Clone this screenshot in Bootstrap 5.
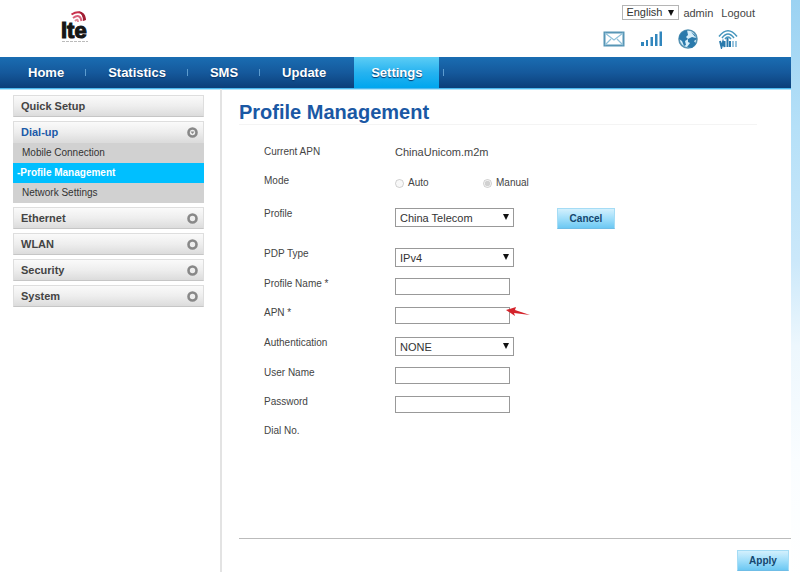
<!DOCTYPE html>
<html lang="en">
<head>
<meta charset="utf-8">
<meta name="viewport" content="width=device-width, initial-scale=1">
<title>Profile Management</title>
<link href="https://cdn.jsdelivr.net/npm/bootstrap@5.3.0/dist/css/bootstrap.min.css" rel="stylesheet">
<style>
body{font-family:"Liberation Sans",Arial,sans-serif;font-size:11px;line-height:16px;color:#444;background:linear-gradient(#9bd2f2,#b5e0f8 22%,#cbe8fa 45%,#edf7fd 60%,#fafdff 80%,#fff) right top/9px 100% no-repeat #fff;padding-right:9px;min-height:100vh}
a{color:inherit;text-decoration:none}
.topbar{height:57px}
.brand-logo{padding:10px 0 0 60px}
.tools{padding:5px 36px 0 0}
.status-icons{gap:14px;padding-right:16px}
.mainnav{background:linear-gradient(#1a6db2,#15599c 50%,#0b3f7a);border-bottom:1px solid #4db8ee;box-shadow:0 1px 0 #b4e6fb;height:32px;font-size:13px;font-weight:bold;color:#fff;padding-left:7px}
.mainnav .nav-link{color:#fff;padding:0 21px;line-height:31px;text-shadow:0 1px 1px #0a3566}
.divided::after{content:"";width:1px;height:7px;background:#5d9ccf;align-self:center}
.mainnav .nav-item{display:flex}
.mainnav .nav-item+.nav-item:not(.current){border-left:1px solid transparent}
.mainnav .current{background:linear-gradient(#5ccdf5,#27b3f0 50%,#00a6ee);margin-left:7px}
.mainnav .current .nav-link{padding:0 17px}
.tail{width:1px;height:7px;background:#5d9ccf;margin-left:4px}
.sidebar{width:222px;padding:6px 16px 0 13px;border-right:2px solid #e3e3e3;min-height:483px}
.menu-head{height:22px;padding:0 5px 0 7px;font-weight:bold;border:1px solid #dedede;border-bottom-color:#c6c6c6;background:linear-gradient(#fafafa,#eee 50%,#dcdcdc)}
.menu-block{margin-bottom:4px}
.menu-head.open{color:#1b5aa8;border-bottom-color:#dcdcdc}
.submenu a{display:block;height:20px;line-height:20px;padding-left:9px;background:#d1d1d1;color:#333;font-size:10px}
.submenu a.chosen{background:#00bfff;color:#fff;padding-left:4px;font-weight:bold}
.content{padding-left:17px}
h1{font-size:20px;line-height:24px;font-weight:bold;color:#1a58a4;margin:0 34px 0 0;padding-top:11px;border-bottom:1px solid #f4f4f4}
.form-area{padding:19px 0 0 25px}
.field{min-height:29px}
.field-mid{min-height:30px}
.field-mode{min-height:33px}
.field-tall{min-height:40px}
.field-label{width:131px;font-size:10px}
.control{padding-top:2px}
.box{display:block;border:1px solid #999;background:#fff;height:17px;width:115px;padding:0 4px;font-size:11px;line-height:15px}
.pick{position:relative;display:block}
.pick select{appearance:none;border:1px solid #999;background:#fff;width:119px;height:19px;padding:0 4px;font-size:11px;line-height:16px;color:#333;border-radius:0;display:block}
.pick::after{content:"";position:absolute;right:5px;top:6px;border:solid transparent;border-width:6px 3px 0;border-top-color:#111;pointer-events:none}
.pick-lang select{width:57px;height:15px;line-height:13px;padding:0 3px;border-color:#b5b5b5}
.pick-lang::after{top:5px;right:5px}
.radio-opt{width:88px;gap:4px;font-size:10px}
.radio-opt input{width:9px;height:9px;margin:0}
.act{border:1px solid #a5dcf5;border-bottom-color:#6fbde6;background:linear-gradient(#d3f0fd,#a0defa 50%,#6cc8f3);color:#14466e;font-weight:bold;font-size:10px;line-height:18px;height:21px;padding:0;border-radius:0}
.act-cancel{width:58px;margin-left:43px}
.act-apply{width:52px;margin-right:2px}
.arrow-mark{position:absolute;left:110px;top:2px}
.footer-rule{border-top:1px solid #bbb;padding:11px 0 6px}
</style>
</head>
<body class="d-flex flex-column">
<header class="topbar d-flex justify-content-between">
  <a class="brand-logo" href="#" aria-label="LTE home">
    <svg width="32" height="36" viewBox="0 0 32 36">
      <text x="1" y="28" font-family="Liberation Sans,Arial,sans-serif" font-weight="bold" font-size="22" fill="#161616" stroke="#161616" stroke-width="1.200">lte</text>
      <g fill="none" stroke-width="2"><path d="M11.500 4.500Q22-2 25 10" stroke="#c9304c"/><path d="M13 8Q20 3 21.500 11" stroke="#d9607a"/><path d="M15 11Q18 8 18 12" stroke="#e08b9b"/></g>
      <path d="M18 1q8 1 8 9l-3 1q0-7-5-10z" fill="#a01d33"/>
      <path d="M2 31.500h26" stroke="#bbb" stroke-dasharray="3 1"/>
    </svg>
  </a>
  <div class="tools">
    <div class="d-flex justify-content-end">
      <span class="pick pick-lang"><select aria-label="Language"><option>English</option></select></span>
      <a href="#" class="ms-1">admin</a><a href="#" class="ms-2">Logout</a>
    </div>
    <div class="status-icons d-flex justify-content-end pt-1 mt-1">
      <svg width="22" height="20" viewBox="0 0 22 20" fill="none"><path d="M1.500 3.500h19v13h-19z" stroke="#5795b5" stroke-width="2"/><path d="M2 4l9 7 9-7M2 16l6-6M20 16l-6-6" stroke="#8fc1da" stroke-width="1.200"/></svg>
      <svg width="24" height="20" viewBox="0 0 24 20"><path d="M2 13h3v4H2zM7 11h2v6H7zM11.500 8H14v9h-2.500zM16 5h2.500v12H16zM20.500 2.500H23V17h-2.500z" fill="#3186bd"/></svg>
      <svg width="22" height="20" viewBox="0 0 22 20"><circle cx="11" cy="10" r="9" fill="#d6eefa" stroke="#5793b3" stroke-width="1.600"/><path d="M10 1Q2 3 2 10l3 2 2 5 2-1-1-4 3-2-2-2 2-2zM14 3l4 3 1 3-4-1-4 2 0 3 2 1-3 4 5 1 4-4-2-3 3-2z" fill="#2a7aac"/></svg>
      <svg class="ms-1" width="22" height="20" viewBox="0 0 22 20"><path d="M2 7.500Q11-4 20 7.500M5 9Q11 1 17 9M8 10q3-4 6 0" fill="none" stroke="#4595bd" stroke-width="1.500"/><path d="M3 12l1.500 6 1.500-5 1.500 5V12M10.500 9v9M13 12v6" fill="none" stroke="#2a7aac" stroke-width="2"/><path d="M16 12v6M19 12v6" stroke="#7fb6d6" stroke-width="1.600"/></svg>
    </div>
  </div>
</header>
<nav class="mainnav d-flex align-items-stretch">
  <ul class="nav flex-nowrap">
    <li class="nav-item divided"><a class="nav-link" href="#">Home</a></li>
    <li class="nav-item divided"><a class="nav-link" href="#">Statistics</a></li>
    <li class="nav-item divided"><a class="nav-link" href="#">SMS</a></li>
    <li class="nav-item"><a class="nav-link" href="#">Update</a></li>
    <li class="nav-item current"><a class="nav-link" href="#" aria-current="page">Settings</a></li>
  </ul>
  <span class="tail align-self-center"></span>
</nav>
<div class="d-flex flex-grow-1">
  <aside class="sidebar flex-shrink-0 align-self-start">
    <div class="menu-block"><a href="#" class="menu-head d-flex align-items-center">Quick Setup</a></div>
    <div class="menu-block">
      <a href="#" class="menu-head open d-flex align-items-center justify-content-between">Dial-up<svg width="11" height="11" viewBox="0 0 11 11"><circle cx="5.500" cy="5.500" r="4" fill="#eee" stroke="#888" stroke-width="2.600"/><path d="M3.500 4.500h4l-2 2.500z" fill="#888"/></svg></a>
      <div class="submenu"><a href="#">Mobile Connection</a><a href="#" class="chosen">-Profile Management</a><a href="#">Network Settings</a></div>
    </div>
    <div class="menu-block"><a href="#" class="menu-head d-flex align-items-center justify-content-between">Ethernet<svg width="11" height="11" viewBox="0 0 11 11"><circle cx="5.500" cy="5.500" r="4" fill="#eee" stroke="#888" stroke-width="2.600"/></svg></a></div>
    <div class="menu-block"><a href="#" class="menu-head d-flex align-items-center justify-content-between">WLAN<svg width="11" height="11" viewBox="0 0 11 11"><circle cx="5.500" cy="5.500" r="4" fill="#eee" stroke="#888" stroke-width="2.600"/></svg></a></div>
    <div class="menu-block"><a href="#" class="menu-head d-flex align-items-center justify-content-between">Security<svg width="11" height="11" viewBox="0 0 11 11"><circle cx="5.500" cy="5.500" r="4" fill="#eee" stroke="#888" stroke-width="2.600"/></svg></a></div>
    <div class="menu-block"><a href="#" class="menu-head d-flex align-items-center justify-content-between">System<svg width="11" height="11" viewBox="0 0 11 11"><circle cx="5.500" cy="5.500" r="4" fill="#eee" stroke="#888" stroke-width="2.600"/></svg></a></div>
  </aside>
  <main class="content flex-grow-1 d-flex flex-column">
    <h1>Profile Management</h1>
    <form class="form-area flex-grow-1">
      <div class="field d-flex"><span class="field-label">Current APN</span><span>ChinaUnicom.m2m</span></div>
      <div class="field-mode d-flex"><span class="field-label">Mode</span>
        <div class="control d-flex align-items-start">
          <label class="radio-opt d-flex align-items-center"><input type="radio" name="mode" disabled>Auto</label>
          <label class="radio-opt d-flex align-items-center"><input type="radio" name="mode" checked disabled>Manual</label>
        </div></div>
      <div class="field-tall d-flex"><label class="field-label" for="profile">Profile</label><div class="control d-flex align-items-start"><span class="pick"><select id="profile"><option>China Telecom</option></select></span><button type="button" class="act act-cancel">Cancel</button></div></div>
      <div class="field-mid d-flex"><label class="field-label" for="pdp">PDP Type</label><div class="control"><span class="pick"><select id="pdp"><option>IPv4</option></select></span></div></div>
      <div class="field d-flex"><label class="field-label" for="pname">Profile Name *</label><div class="control"><input class="box" id="pname" type="text"></div></div>
      <div class="field-mid d-flex"><label class="field-label" for="apn">APN *</label><div class="control position-relative"><input class="box" id="apn" type="text"><svg class="arrow-mark" width="26" height="12" viewBox="0 0 26 12"><path d="M1 3L11 0 10 3 25 8 9 6 10 9z" fill="#d4232b"/></svg></div></div>
      <div class="field-mid d-flex"><label class="field-label" for="auth">Authentication</label><div class="control"><span class="pick"><select id="auth"><option>NONE</option></select></span></div></div>
      <div class="field d-flex"><label class="field-label" for="user">User Name</label><div class="control"><input class="box" id="user" type="text"></div></div>
      <div class="field d-flex"><label class="field-label" for="pass">Password</label><div class="control"><input class="box" id="pass" type="password"></div></div>
      <div class="field d-flex"><span class="field-label">Dial No.</span></div>
    </form>
    <div class="footer-rule text-end"><button type="button" class="act act-apply">Apply</button></div>
  </main>
</div>
<script src="https://cdn.jsdelivr.net/npm/bootstrap@5.3.0/dist/js/bootstrap.bundle.min.js"></script>
</body>
</html>
